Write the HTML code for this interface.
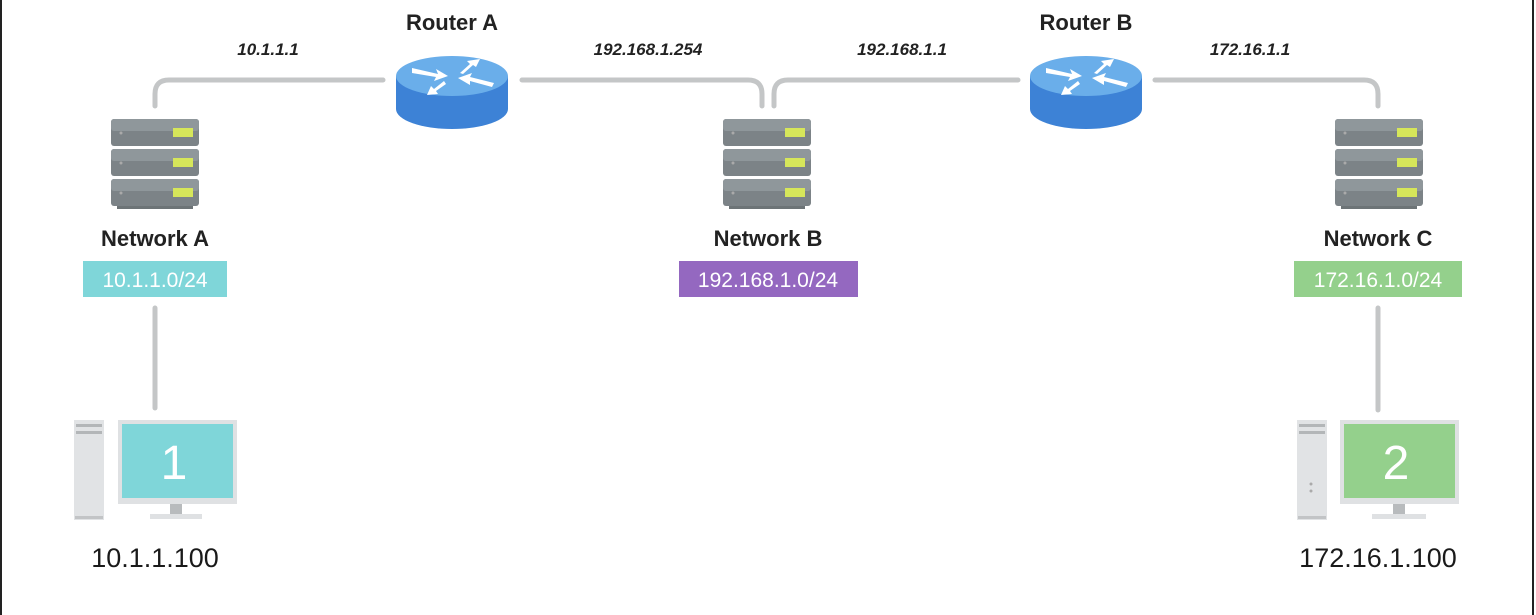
<!DOCTYPE html>
<html><head><style>
html,body{margin:0;padding:0;background:#fff;}
svg{display:block}
text{font-family:"Liberation Sans",sans-serif;}
</style></head><body>
<svg width="1536" height="615" viewBox="0 0 1536 615">
<rect x="0" y="0" width="2" height="615" fill="#222"/>
<rect x="1532" y="0" width="2" height="615" fill="#222"/>
<g fill="none" stroke="#c4c6c7" stroke-width="5" stroke-linecap="round">
<path d="M155 106 V94 Q155 80 169 80 H383"/>
<path d="M522 80 H748 Q762 80 762 94 V106"/>
<path d="M774 106 V94 Q774 80 788 80 H1018"/>
<path d="M1155 80 H1364 Q1378 80 1378 94 V106"/>
<path d="M155 308 V408"/>
<path d="M1378 308 V410"/>
</g>
<defs>
<g id="router">
<path d="M-56 0 V33 A56 20 0 0 0 56 33 V0 Z" fill="#3d82d6"/>
<ellipse cx="0" cy="0" rx="56" ry="20" fill="#6aaeea"/>
<g fill="#fff">
<path d="M-40 -8 L-14 -2 L-16 -7 L-4 0 L-18 5 L-16 1 L-40 -3Z"/>
<path d="M8 -3 L18 -12 L15 -15 L28 -17 L24 -9 L21 -11 L11 -2Z"/>
<path d="M42 7 L18 1 L20 -3 L6 2 L18 9 L18 5 L40 11Z"/>
<path d="M-8 5 L-18 13 L-21 10 L-25 19 L-14 18 L-16 15 L-6 8Z"/>
</g>
</g>
<g id="server">
<g>
<rect x="0" y="0" width="88" height="27" rx="3" fill="#7c8387"/>
<rect x="0" y="0" width="88" height="12" rx="3" fill="#8f979b"/>
<rect x="62" y="9" width="20" height="9" fill="#d6e65a"/>
<circle cx="10" cy="14" r="1.5" fill="#aaa"/>
</g>
<g transform="translate(0,30)">
<rect x="0" y="0" width="88" height="27" rx="3" fill="#7c8387"/>
<rect x="0" y="0" width="88" height="12" rx="3" fill="#8f979b"/>
<rect x="62" y="9" width="20" height="9" fill="#d6e65a"/>
<circle cx="10" cy="14" r="1.5" fill="#aaa"/>
</g>
<g transform="translate(0,60)">
<rect x="0" y="0" width="88" height="27" rx="3" fill="#7c8387"/>
<rect x="0" y="0" width="88" height="12" rx="3" fill="#8f979b"/>
<rect x="62" y="9" width="20" height="9" fill="#d6e65a"/>
<circle cx="10" cy="14" r="1.5" fill="#aaa"/>
</g>
<rect x="6" y="87" width="76" height="3" fill="#6d7477"/>
</g>
</defs>
<use href="#router" x="452" y="76"/>
<use href="#router" x="1086" y="76"/>
<use href="#server" x="111" y="119"/>
<use href="#server" x="723" y="119"/>
<use href="#server" x="1335" y="119"/>

<g font-weight="bold" font-size="22" text-anchor="middle" fill="#222">
<text x="452" y="30">Router A</text>
<text x="1086" y="30">Router B</text>
<text x="155" y="246">Network A</text>
<text x="768" y="246">Network B</text>
<text x="1378" y="246">Network C</text>
</g>
<g font-weight="bold" font-style="italic" font-size="17" text-anchor="middle" fill="#222">
<text x="268" y="55">10.1.1.1</text>
<text x="648" y="55">192.168.1.254</text>
<text x="902" y="55">192.168.1.1</text>
<text x="1250" y="55">172.16.1.1</text>
</g>
<rect x="83" y="261" width="144" height="36" fill="#7fd6d9"/>
<rect x="679" y="261" width="179" height="36" fill="#9468c0"/>
<rect x="1294" y="261" width="168" height="36" fill="#94d08c"/>
<g font-size="21" text-anchor="middle" fill="#fff">
<text x="155" y="287">10.1.1.0/24</text>
<text x="768" y="287">192.168.1.0/24</text>
<text x="1378" y="287">172.16.1.0/24</text>
</g>

<rect x="74" y="420" width="30" height="100" fill="#e1e3e5"/>
<rect x="76" y="424" width="26" height="3" fill="#b3b6b8"/>
<rect x="76" y="431" width="26" height="3" fill="#b3b6b8"/>
<rect x="75" y="516" width="28" height="3" fill="#c2c4c6"/>
<rect x="118" y="420" width="119" height="84" fill="#dfe1e3"/>
<rect x="122" y="424" width="111" height="74" fill="#7fd6d9"/>
<rect x="170" y="504" width="12" height="10" fill="#b8bbbd"/>
<rect x="150" y="514" width="52" height="5" fill="#dfe1e3"/>
<text x="174" y="479" font-size="48" fill="#fff" text-anchor="middle">1</text>
<text x="155" y="567" font-size="27" fill="#1a1a1a" text-anchor="middle">10.1.1.100</text>

<rect x="1297" y="420" width="30" height="100" fill="#e1e3e5"/>
<rect x="1299" y="424" width="26" height="3" fill="#b3b6b8"/>
<rect x="1299" y="431" width="26" height="3" fill="#b3b6b8"/>
<circle cx="1311" cy="484" r="1.5" fill="#aaa"/>
<circle cx="1311" cy="491" r="1.5" fill="#aaa"/>
<rect x="1298" y="516" width="28" height="3" fill="#c2c4c6"/>
<rect x="1340" y="420" width="119" height="84" fill="#dfe1e3"/>
<rect x="1344" y="424" width="111" height="74" fill="#94d08c"/>
<rect x="1393" y="504" width="12" height="10" fill="#b8bbbd"/>
<rect x="1372" y="514" width="54" height="5" fill="#dfe1e3"/>
<text x="1396" y="479" font-size="48" fill="#fff" text-anchor="middle">2</text>
<text x="1378" y="567" font-size="27" fill="#1a1a1a" text-anchor="middle">172.16.1.100</text>
</svg>
</body></html>
